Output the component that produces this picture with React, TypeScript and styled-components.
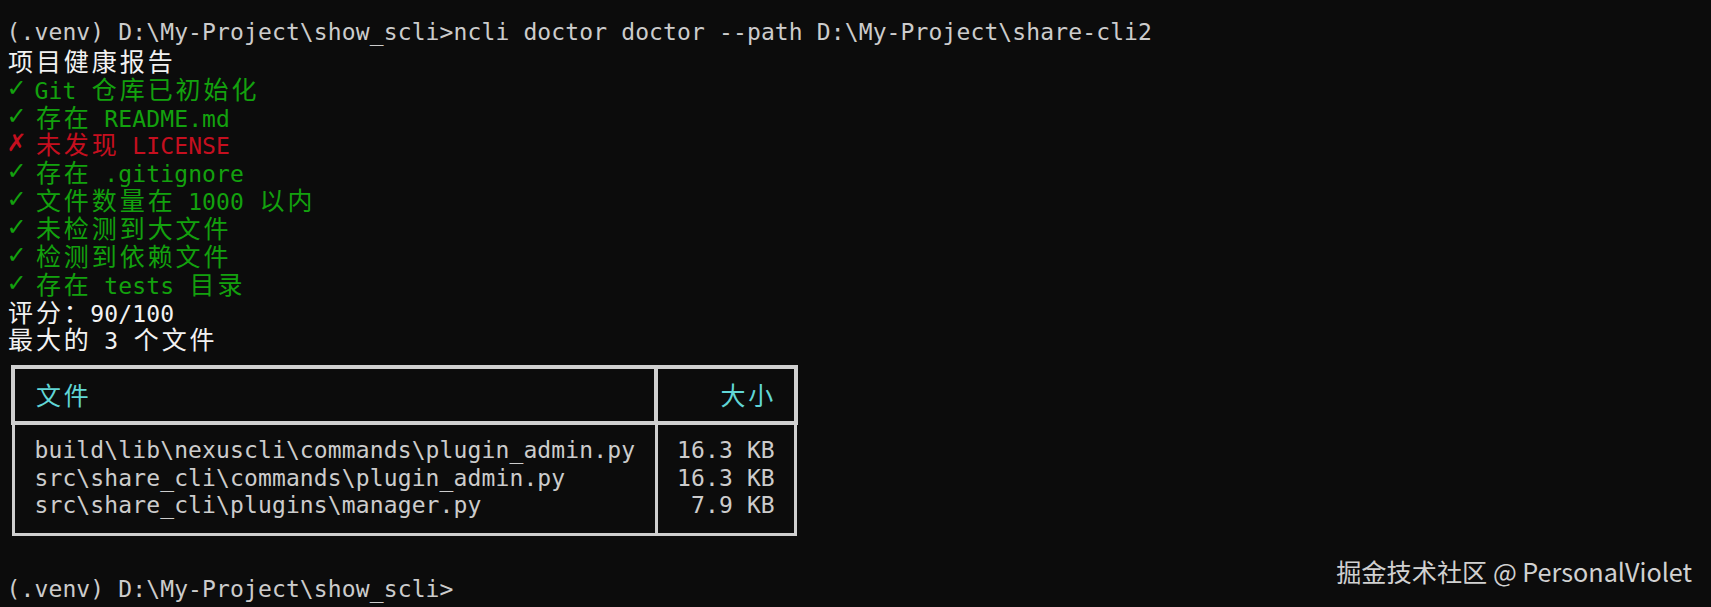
import React from "react";
import styled, { createGlobalStyle } from "styled-components";

const W = 13.97; // terminal cell width
const L = 27.85; // terminal line height
const X0 = 6.5; // left padding of the terminal
const TOP = 19.1;
const HEAVY = 4;
const LIGHT = 3;
const FONT = 23;
const CJK_FONT = 25;

const palette = {
  fg: "#cccccc",
  bright: "#f2f2f2",
  green: "#13a10e",
  red: "#c50f1f",
  cyan: "#61d6d6",
  border: "#d0d0d0",
  bg: "#0c0c0c",
};

type Tone = keyof typeof palette;

const Global = createGlobalStyle`
  html, body {
    margin: 0;
    padding: 0;
    background: ${palette.bg};
  }
  body {
    width: 1711px;
    height: 607px;
    overflow: hidden;
  }
`;

const Screen = styled.div`
  position: relative;
  box-sizing: border-box;
  width: 1711px;
  height: 607px;
  padding: ${TOP}px 0 0 ${X0}px;
  background: ${palette.bg};
  font-family: "DejaVu Sans Mono", "Noto Sans CJK SC", monospace;
  font-size: ${FONT}px;
  letter-spacing: ${W - FONT * 0.60205}px;
  color: ${palette.fg};
`;

const Line = styled.div<{ $tone?: Tone }>`
  height: ${L}px;
  line-height: ${L}px;
  white-space: pre;
  color: ${(p) => palette[p.$tone ?? "fg"]};
`;

const Cjk = styled.span`
  font-family: "Noto Sans CJK SC", sans-serif;
  font-size: ${CJK_FONT}px;
  letter-spacing: ${2 * W - CJK_FONT}px;
  padding-left: ${(2 * W - CJK_FONT) / 2}px;
  margin-right: -${(2 * W - CJK_FONT) / 2}px;
`;

const Mark = styled.span`
  display: inline-block;
  width: ${W}px;
  text-align: center;
  font-family: "DejaVu Sans", sans-serif;
  font-size: 24px;
  letter-spacing: 0;
  line-height: ${L}px;
  vertical-align: top;
`;

const Table = styled.div`
  display: flex;
  flex-direction: column;
  margin: ${L / 2 - HEAVY / 2}px 0 ${L / 2 - LIGHT / 2}px ${W / 2 - HEAVY / 2}px;
`;

const HeadBox = styled.div`
  box-sizing: border-box;
  width: ${56 * W + HEAVY}px;
  border: ${HEAVY}px solid ${palette.border};
  display: grid;
  grid-template-columns: ${46 * W}px ${10 * W - HEAVY}px;
`;

const HeadCell = styled.div<{ $right?: boolean }>`
  box-sizing: border-box;
  height: ${2 * L - HEAVY}px;
  padding: ${L / 2 - HEAVY / 2}px ${1.5 * W - HEAVY / 2}px;
  line-height: ${L}px;
  white-space: pre;
  color: ${palette.cyan};
  text-align: ${(p) => (p.$right ? "right" : "left")};
  border-right: ${(p) => (p.$right ? "none" : `${HEAVY}px solid ${palette.border}`)};
`;

const BodyBox = styled.div`
  box-sizing: border-box;
  width: ${56 * W + LIGHT}px;
  margin-left: ${(HEAVY - LIGHT) / 2}px;
  border: ${LIGHT}px solid ${palette.border};
  border-top: none;
  display: grid;
  grid-template-columns: ${46 * W}px ${10 * W - LIGHT}px;
`;

const BodyCell = styled.div<{ $right?: boolean }>`
  box-sizing: border-box;
  padding: ${L / 2 - HEAVY / 2}px ${1.5 * W - LIGHT / 2}px ${L / 2 - LIGHT / 2}px;
  line-height: ${L}px;
  white-space: pre;
  color: ${palette.fg};
  text-align: ${(p) => (p.$right ? "right" : "left")};
  border-right: ${(p) => (p.$right ? "none" : `${LIGHT}px solid ${palette.border}`)};
`;

const Watermark = styled.div`
  position: absolute;
  right: 19px;
  top: 559px;
  font-family: "Noto Sans CJK SC", "Noto Sans", sans-serif;
  font-size: 25.2px;
  line-height: 25px;
  letter-spacing: 0;
  color: rgba(255, 255, 255, 0.82);
  white-space: pre;
`;

const CJK_RE = /([\u3000-\u303f\u3400-\u9fff\uff00-\uffef]+)/;

function Term({ text }: { text: string }) {
  const parts = text.split(CJK_RE);
  return (
    <>
      {parts.map((part, i) =>
        i % 2 === 1 ? <Cjk key={i}>{part}</Cjk> : <React.Fragment key={i}>{part}</React.Fragment>
      )}
    </>
  );
}

const report: { mark?: string; text: string; tone: Tone }[] = [
  { text: "(.venv) D:\\My-Project\\show_scli>ncli doctor doctor --path D:\\My-Project\\share-cli2", tone: "fg" },
  { text: "项目健康报告", tone: "bright" },
  { mark: "✓", text: " Git 仓库已初始化", tone: "green" },
  { mark: "✓", text: " 存在 README.md", tone: "green" },
  { mark: "✗", text: " 未发现 LICENSE", tone: "red" },
  { mark: "✓", text: " 存在 .gitignore", tone: "green" },
  { mark: "✓", text: " 文件数量在 1000 以内", tone: "green" },
  { mark: "✓", text: " 未检测到大文件", tone: "green" },
  { mark: "✓", text: " 检测到依赖文件", tone: "green" },
  { mark: "✓", text: " 存在 tests 目录", tone: "green" },
  { text: "评分：90/100", tone: "bright" },
  { text: "最大的 3 个文件", tone: "bright" },
];

const files = [
  "build\\lib\\nexuscli\\commands\\plugin_admin.py",
  "src\\share_cli\\commands\\plugin_admin.py",
  "src\\share_cli\\plugins\\manager.py",
];
const sizes = ["16.3 KB", "16.3 KB", "7.9 KB"];

export default function App() {
  return (
    <>
      <Global />
      <Screen>
        {report.map((l, i) => (
          <Line key={i} $tone={l.tone}>
            {l.mark && <Mark>{l.mark}</Mark>}
            <Term text={l.text} />
          </Line>
        ))}
        <Table>
          <HeadBox>
            <HeadCell>
              <Term text="文件" />
            </HeadCell>
            <HeadCell $right>
              <Term text="大小" />
            </HeadCell>
          </HeadBox>
          <BodyBox>
            <BodyCell>{files.join("\n")}</BodyCell>
            <BodyCell $right>{sizes.join("\n")}</BodyCell>
          </BodyBox>
        </Table>
        <Line />
        <Line>{"(.venv) D:\\My-Project\\show_scli>"}</Line>
        <Watermark>掘金技术社区 @ PersonalViolet</Watermark>
      </Screen>
    </>
  );
}
